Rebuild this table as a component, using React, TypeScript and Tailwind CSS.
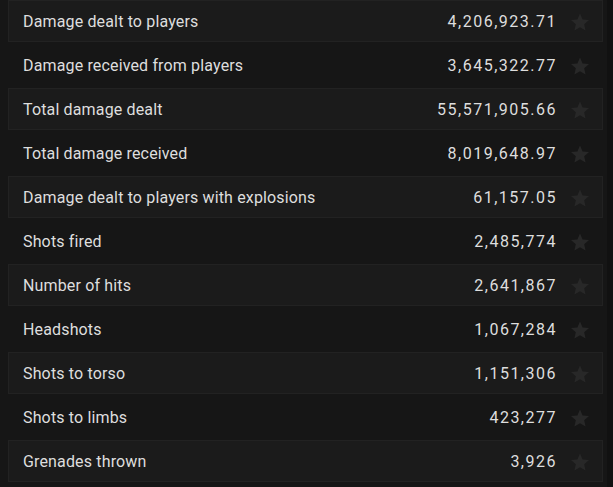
const stats = [
  { label: "Damage dealt to players", value: "4,206,923.71" },
  { label: "Damage received from players", value: "3,645,322.77" },
  { label: "Total damage dealt", value: "55,571,905.66" },
  { label: "Total damage received", value: "8,019,648.97" },
  { label: "Damage dealt to players with explosions", value: "61,157.05" },
  { label: "Shots fired", value: "2,485,774" },
  { label: "Number of hits", value: "2,641,867" },
  { label: "Headshots", value: "1,067,284" },
  { label: "Shots to torso", value: "1,151,306" },
  { label: "Shots to limbs", value: "423,277" },
  { label: "Grenades thrown", value: "3,926" },
];

function Star() {
  return (
    <svg width="20" height="20" viewBox="0 0 24 24" className="text-[#282828]">
      <path
        fill="currentColor"
        d="M12 1.8l3.1 7.1 7.7.7-5.8 5.1 1.7 7.6L12 18.3l-6.7 4 1.7-7.6-5.8-5.1 7.7-.7z"
      />
    </svg>
  );
}

export default function App() {
  return (
    <div className="flex h-[487px] w-[613px] overflow-hidden bg-[#161616] font-['Roboto',sans-serif]">
      <div className="flex flex-1 flex-col pl-2 pr-1">
        {stats.map((s, i) => (
          <div
            key={s.label}
            className={
              i % 2 === 0
                ? "flex h-[42px] shrink-0 items-center border border-[#222222] bg-[#1b1b1b] pt-[2px] pl-[14px] pr-[11px]"
                : "flex h-[46px] shrink-0 items-center border border-transparent pt-[2px] pl-[14px] pr-[11px]"
            }
          >
            <span className="flex-1 text-[16px] tracking-[0.15px] text-[#dedede]">{s.label}</span>
            <span className="text-[16px] tracking-[1.5px] text-[#dedede]">{s.value}</span>
            <span className="ml-[12px] flex w-[22px] justify-center">
              <Star />
            </span>
          </div>
        ))}
      </div>
      <div className="w-[6px] bg-[#111111]" />
    </div>
  );
}
